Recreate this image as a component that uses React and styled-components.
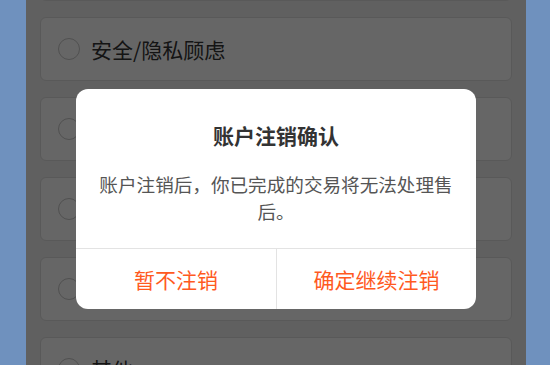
import React from "react";
import styled, { createGlobalStyle } from "styled-components";

const Global = createGlobalStyle`
  html, body { margin: 0; padding: 0; }
  body {
    background: #6f91be;
    font-family: "Noto Sans CJK SC", "Noto Sans", sans-serif;
    overflow: hidden;
  }
`;

const Page = styled.div`
  position: relative;
  margin-left: 26px;
  width: 500px;
  height: 365px;
  overflow: hidden;
  background: #f0f0f0;
`;

const List = styled.div`
  display: flex;
  flex-direction: column;
  gap: 16px;
  padding: 0 14px;
  margin-top: -63px;
`;

const Card = styled.div`
  box-sizing: border-box;
  height: 64px;
  flex: none;
  display: flex;
  align-items: center;
  gap: 11px;
  padding-left: 17px;
  background: #ffffff;
  border: 1px solid #dedede;
  border-radius: 6px;
`;

const Radio = styled.span`
  box-sizing: border-box;
  width: 22px;
  height: 22px;
  border-radius: 50%;
  border: 1px solid #c8c8c8;
  flex: none;
`;

const Label = styled.span`
  font-size: 21px;
  line-height: 28px;
  color: #333;
`;

const Overlay = styled.div`
  position: absolute;
  inset: 0;
  background: rgba(0, 0, 0, 0.6);
`;

const Dialog = styled.div`
  position: absolute;
  left: 50px;
  top: 89px;
  width: 400px;
  background: #fff;
  border-radius: 12px;
  overflow: hidden;
  display: flex;
  flex-direction: column;
`;

const Body = styled.div`
  padding: 32px 20px 24px;
  display: flex;
  flex-direction: column;
  align-items: center;
  gap: 21px;
`;

const Title = styled.div`
  font-size: 21px;
  line-height: 28px;
  font-weight: 700;
  color: #333;
`;

const Message = styled.div`
  font-size: 18.6px;
  line-height: 27px;
  color: #555;
  text-align: center;
`;

const Actions = styled.div`
  display: grid;
  grid-template-columns: 1fr 1fr;
  border-top: 1px solid #e3e3e3;
  height: 60px;
`;

const Action = styled.button`
  border: none;
  background: none;
  font-family: inherit;
  font-size: 21px;
  color: #ff5a1f;
  padding: 0;
  & + & { border-left: 1px solid #e3e3e3; }
`;

const items = ["", "安全/隐私顾虑", "", "", "", "其他"];

export default function App() {
  return (
    <>
      <Global />
      <Page>
        <List>
          {items.map((t, i) => (
            <Card key={i}>
              <Radio />
              <Label>{t}</Label>
            </Card>
          ))}
        </List>
        <Overlay />
        <Dialog>
          <Body>
            <Title>账户注销确认</Title>
            <Message>账户注销后，你已完成的交易将无法处理售后。</Message>
          </Body>
          <Actions>
            <Action>暂不注销</Action>
            <Action>确定继续注销</Action>
          </Actions>
        </Dialog>
      </Page>
    </>
  );
}
